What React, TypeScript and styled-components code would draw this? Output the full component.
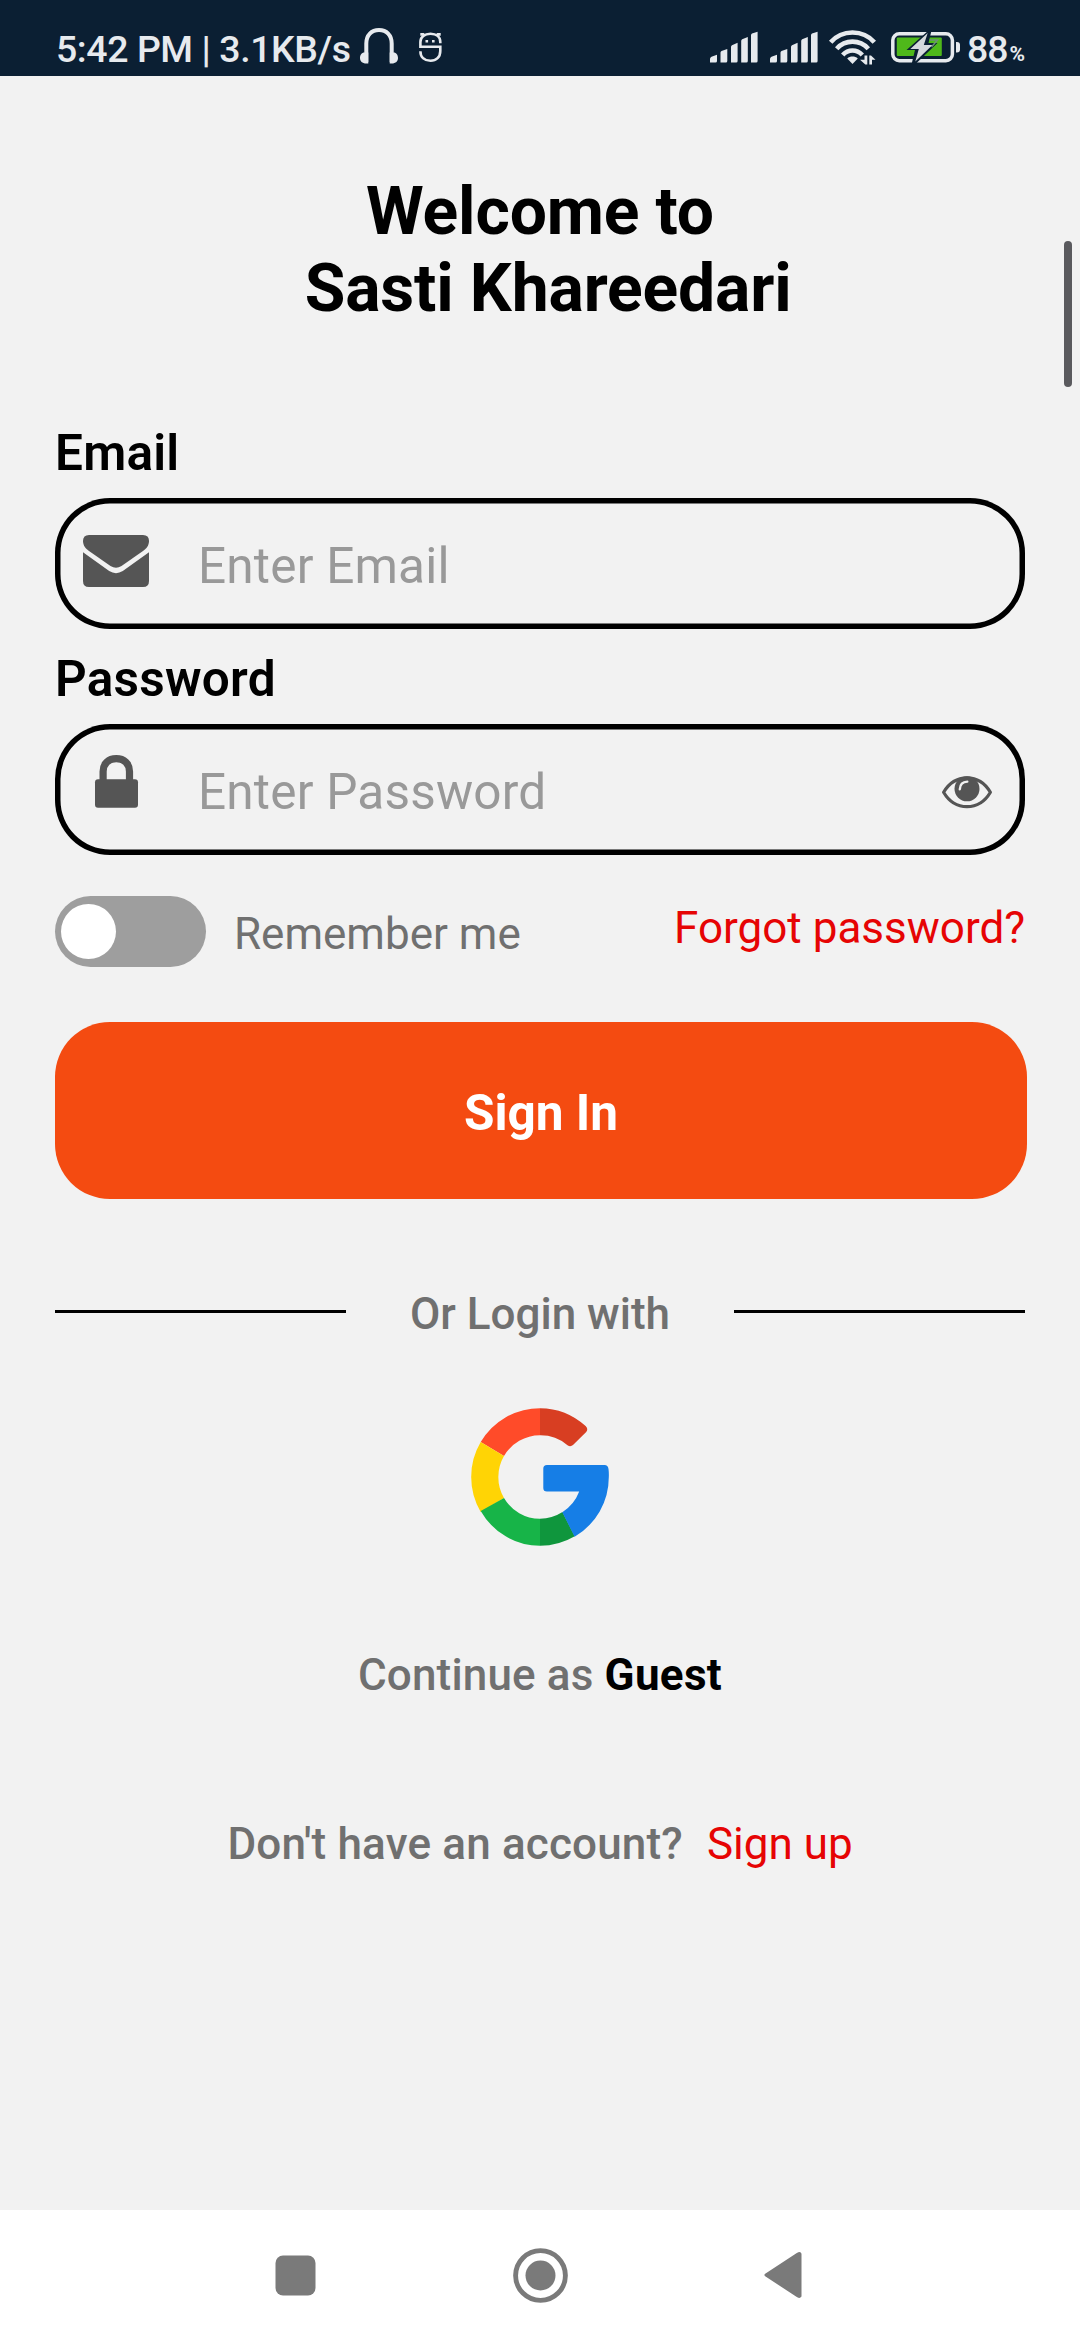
import React, { useState } from "react";
import styled, { createGlobalStyle } from "styled-components";

const GlobalStyle = createGlobalStyle`
  *, *::before, *::after { box-sizing: border-box; }
  body { margin: 0; background: #f2f2f2; }
  button, input { font: inherit; border: 0; padding: 0; margin: 0; background: none; color: inherit; }
`;

const Screen = styled.div`
  display: flex;
  flex-direction: column;
  position: relative;
  width: 1080px;
  height: 2340px;
  overflow: hidden;
  background: #f2f2f2;
  font-family: Roboto, "Noto Sans", sans-serif;
`;

const StatusBar = styled.header`
  display: flex;
  align-items: flex-start;
  justify-content: space-between;
  flex: none;
  height: 76px;
  padding: 27px 55px 0 56px;
  background: #0b1f33;
  color: #e7eaee;
`;

const StatusGroup = styled.div`
  display: flex;
  align-items: flex-start;
`;

const StatusText = styled.span<{ $tracking: number }>`
  font-size: 37.4px;
  line-height: 44px;
  font-weight: 500;
  letter-spacing: ${(p) => p.$tracking}px;
  white-space: pre;
`;

const Percent = styled.span`
  font-size: 21px;
  line-height: 26px;
  font-weight: 700;
  margin: 14px 0 0 2px;
`;

const Glyph = styled.svg<{ $left?: number; $top?: number }>`
  display: block;
  flex: none;
  overflow: visible;
  margin-left: ${(p) => p.$left ?? 0}px;
  margin-top: ${(p) => p.$top ?? 0}px;
`;

const Content = styled.main`
  display: flex;
  flex-direction: column;
  flex: 1;
  padding: 97px 55px 0;
`;

const Title = styled.h1`
  margin: 0 0 97px;
  font-size: 66px;
  line-height: 77px;
  font-weight: 700;
  letter-spacing: -0.15px;
  text-align: center;
  white-space: pre;
  color: #000;
`;

const Label = styled.label`
  font-size: 49.5px;
  line-height: 58px;
  font-weight: 600;
  letter-spacing: 0.25px;
  color: #000;
`;

const Field = styled.div`
  display: flex;
  align-items: center;
  height: 131px;
  margin: 16px 0 21px;
  padding: 0 33px 0 28px;
  box-shadow: inset 0 0 0 5.5px #000;
  border-radius: 55px;
`;

const FieldIcon = styled.span<{ $raise: number }>`
  display: flex;
  justify-content: center;
  width: 66px;
  margin: 0 49px ${(p) => p.$raise * 2}px 0;
  color: #555;
`;

const FieldInput = styled.input`
  flex: 1;
  min-width: 0;
  height: 58px;
  margin-top: 4px;
  font-size: 49.5px;
  letter-spacing: 0.2px;
  outline: none;
  &::placeholder { color: #999; opacity: 1; }
`;

const EyeButton = styled.button`
  display: flex;
  margin-top: 5px;
  color: #555;
`;

const OptionsRow = styled.div`
  display: flex;
  align-items: flex-start;
  height: 71px;
  margin: 20px 0 55px;
`;

const Switch = styled.button<{ $on: boolean }>`
  display: flex;
  align-items: center;
  justify-content: ${(p) => (p.$on ? "flex-end" : "flex-start")};
  width: 151px;
  height: 71px;
  padding: 0 6px;
  border-radius: 36px;
  background: #9e9e9e;
`;

const Thumb = styled.span`
  width: 55px;
  height: 55px;
  border-radius: 50%;
  background: #fff;
`;

const RememberText = styled.span`
  margin: 12px auto 0 28px;
  font-size: 44px;
  line-height: 52px;
  color: #707070;
`;

const LinkText = styled.a<{ $left?: number; $top?: number }>`
  margin-left: ${(p) => p.$left ?? 0}px;
  margin-top: ${(p) => p.$top ?? 0}px;
  font-size: 44px;
  line-height: 52px;
  color: #e60404;
`;

const SignInButton = styled.button`
  flex: none;
  width: 972px;
  height: 177px;
  padding-top: 5px;
  border-radius: 55px;
  background: #f44b11;
  color: #fff;
  font-size: 49.5px;
  line-height: 58px;
  font-weight: 700;
`;

const Divider = styled.div`
  display: flex;
  justify-content: space-between;
  margin-top: 89px;
`;

const Rule = styled.span`
  width: 291px;
  height: 3px;
  margin-top: 22px;
  background: #000;
`;

const Muted = styled.span<{ $tracking?: number }>`
  font-size: 44px;
  line-height: 52px;
  font-weight: 500;
  letter-spacing: ${(p) => p.$tracking ?? 0}px;
  color: #707070;
`;

const GoogleButton = styled.button`
  display: flex;
  align-self: center;
  margin-top: 68px;
`;

const Line = styled.p<{ $top: number }>`
  display: flex;
  justify-content: center;
  margin: ${(p) => p.$top}px 0 0;
  white-space: pre;
`;

const Strong = styled.b`
  font-size: 44px;
  line-height: 52px;
  font-weight: 700;
  letter-spacing: 0.3px;
  color: #000;
`;

const ScrollThumb = styled.div`
  position: absolute;
  top: 241px;
  right: 8px;
  width: 8px;
  height: 146px;
  border-radius: 4px;
  background: #5a5a5e;
`;

const NavBar = styled.nav`
  display: flex;
  align-items: center;
  justify-content: space-between;
  flex: none;
  height: 130px;
  padding: 0 278px 0 275px;
  background: #fff;
  color: #7a7a7a;
`;

const SignalIcon = ({ left }: { left: number }) => (
  <Glyph $left={left} $top={5} width="48" height="31" viewBox="0 0 48 31" fill="currentColor">
    <path d="M0 30.5V27q0-1.6 1.5-2.3L7 22.8v6.2q0 1.5-1.5 1.5zM10.5 30.5V20.5q0-1 1-1.5l5.8-2v12q0 1.5-1.5 1.5zM21 30.5V15q0-1.2 1-1.8l5.6-2.4V29q0 1.5-1.5 1.5zM31.2 30.5V9q0-1.2 1-1.8L37.8 5v24q0 1.5-1.5 1.5zM41 30.5V3.2q0-1.2 1-1.7L47.6-.2V29q0 1.5-1.5 1.5z" />
  </Glyph>
);

const HeadphonesIcon = () => (
  <Glyph $left={9} $top={1} width="38" height="36" viewBox="0 0 38 36" fill="none">
    <path d="M6.3 34V15.5C6.3 7 11.5 2 19 2s12.7 5 12.7 13.5V34" stroke="currentColor" strokeWidth="4" />
    <path d="M4.5 24.500h3.800V35.500H6.500C2 35.500 0 33 0 30s1.500-5.500 4.500-5.500zM33.500 24.500h-3.800V35.500h1.800c4.500 0 6.500-2.500 6.500-5.500s-1.500-5.500-4.500-5.500z" fill="currentColor" />
  </Glyph>
);

const DebugIcon = () => (
  <Glyph $left={21} $top={5} width="23" height="31" viewBox="0 0 23 31" fill="none" stroke="currentColor" strokeWidth="2.600">
    <path d="M21.300 11.300V10C21.300 5 17.500 1.700 11.500 1.700S1.400 5 1.400 10v4.800h19.900V19c0 6-4 9.800-9.800 9.800S1.400 25.500 1.400 19.300" />
    <path d="M1.300 2.400h3l1.500 1.400M21.700 2.400h-3l-1.500 1.400" />
    <path d="M6.500 9.200h2.600M13 9.200h2.600" />
  </Glyph>
);

const WifiIcon = () => (
  <Glyph $left={11} $top={3} width="47" height="35" viewBox="0 0 47 35" fill="none">
    <g stroke="currentColor" strokeWidth="4.600">
      <path d="M1.700 12.300C13-.7 34-.7 45.300 12.300" />
      <path d="M7.700 18.700c8.500-9.500 23.100-9.500 31.600 0" />
      <path d="M13.700 25c5.500-6 14.100-6 19.600 0" />
    </g>
    <path d="M18.200 28.500c3-2.600 7.600-2.600 10.600 0L23.500 34z" fill="currentColor" />
    <path d="M31 28l5.500 7h-8z" fill="#0b1f33" />
    <path d="M35.500 25.500h2.800v9h-2L31 29.800h4.500zM40.300 34.500v-9h1.700l4.500 4.200h-3.500v4.800z" fill="currentColor" />
  </Glyph>
);

const BatteryIcon = () => (
  <Glyph $left={15} $top={5} width="69" height="31" viewBox="0 0 69 31" fill="none">
    <rect x="1.800" y="1.800" width="59.600" height="26.900" rx="6.500" stroke="currentColor" strokeWidth="3.500" />
    <rect x="5.800" y="5.500" width="45" height="18.500" rx="1" fill="#4fb81a" />
    <path d="M37.500-1.500L15.500 18h8.500l-3.500 14.500h3.500L46.500 11h-9l3-12.500z" fill="#0b1f33" />
    <path d="M36.700 1L19.300 17h8.500l-3.500 12.500L41.500 13h-8.700z" fill="#d5d9dd" />
    <path d="M38.500 8h8l-6 7" stroke="#6e8f78" strokeWidth="1.500" />
    <path d="M65 10h1q3 0 3 3v4.500q0 3-3 3h-1z" fill="currentColor" />
  </Glyph>
);

const MailIcon = () => (
  <Glyph width="66" height="52" viewBox="0 0 66 52" fill="currentColor">
    <path d="M6 0h54q6 0 6 6c0 4.500-2.500 7.500-6 10L38.500 31q-5.500 3.500-11 0L6 16C2.500 13.500 0 10.500 0 6q0-6 6-6z" />
    <path d="M0 17.300L26.200 36q6.800 4.300 13.600 0L66 17.300V46q0 6-6 6H6q-6 0-6-6z" />
  </Glyph>
);

const LockIcon = () => (
  <Glyph width="43" height="53" viewBox="0 0 43 53">
    <path d="M8.100 26V16.500C8.100 8.500 13.500 3.600 21.300 3.600S34.500 8.500 34.500 16.500V26" fill="none" stroke="currentColor" strokeWidth="7.200" />
    <rect y="24.300" width="43" height="28.500" rx="3" fill="currentColor" />
  </Glyph>
);

const EyeIcon = () => (
  <Glyph width="50" height="33" viewBox="0 0 50 33">
    <path d="M1.600 16.200C13-3 37-3 48.400 16.200 37 35.500 13 35.500 1.600 16.200z" fill="none" stroke="currentColor" strokeWidth="3.200" strokeLinejoin="round" />
    <circle cx="25" cy="12.800" r="12.500" fill="currentColor" />
    <path d="M17.800 13.200Q18.200 5.800 25.300 5.600" fill="none" stroke="#f2f2f2" strokeWidth="2.400" strokeLinecap="round" />
  </Glyph>
);

const GoogleIcon = () => (
  <Glyph width="138" height="138" viewBox="-69 -69 138 138">
    <path d="M0-68.800A68.800 68.800 0 0 0-59.300-34.900L-36-21A41.700 41.700 0 0 1 0-41.700z" fill="#ff4b29" />
    <path d="M0-68.800V-41.700A41.700 41.700 0 0 1 27.500-31.800Q30.500-29.800 33-32L46.200-45.100Q48.600-48 45.600-51A68.800 68.800 0 0 0 0-68.800z" fill="#d83e22" />
    <path d="M-59.300-34.900A68.800 68.800 0 0 0-59.300 34.900L-36 21A41.700 41.700 0 0 1-36-21z" fill="#ffd405" />
    <path d="M0 68.800A68.800 68.800 0 0 1-59.300 34L-36 21A41.700 41.700 0 0 0 0 41.700z" fill="#17b448" />
    <path d="M0 68.800A68.800 68.800 0 0 0 34.800 59.300L22.500 35.100A41.700 41.700 0 0 1 0 41.700z" fill="#0f963d" />
    <path d="M7-12H64.500Q68 -12 68.500-8Q69-4 68.800 0A68.800 68.800 0 0 1 34.600 59.700L22.300 35.300A42 42 0 0 0 39.200 14.600H7Q3.300 14.600 3.300 11V-8.400Q3.300-12 7-12z" fill="#167ee6" />
  </Glyph>
);

const RecentsIcon = () => (
  <Glyph width="41" height="41" viewBox="0 0 41 41">
    <rect x=".5" y=".5" width="40" height="40" rx="7.500" fill="currentColor" />
  </Glyph>
);

const HomeIcon = () => (
  <Glyph width="55" height="55" viewBox="0 0 55 55">
    <circle cx="27.500" cy="27.500" r="24.900" fill="none" stroke="currentColor" strokeWidth="4.900" />
    <circle cx="27.500" cy="27.500" r="15" fill="currentColor" />
  </Glyph>
);

const BackIcon = () => (
  <Glyph width="38" height="46" viewBox="0 0 38 46">
    <path d="M34 2L2 23l32 21q1.500.8 2 0V2q-.5-.8-2 0z" fill="currentColor" stroke="currentColor" strokeWidth="3" strokeLinejoin="round" />
  </Glyph>
);

export default function App() {
  const [remember, setRemember] = useState(false);
  const [visible, setVisible] = useState(false);

  return (
    <>
      <GlobalStyle />
      <Screen>
        <StatusBar>
          <StatusGroup>
            <StatusText $tracking={-0.4}>5:42 PM | 3.1KB/s</StatusText>
            <HeadphonesIcon />
            <DebugIcon />
          </StatusGroup>
          <StatusGroup>
            <SignalIcon left={0} />
            <SignalIcon left={12} />
            <WifiIcon />
            <BatteryIcon />
            <Glyph width="7" height="1" />
            <StatusText $tracking={-1}>88</StatusText>
            <Percent>%</Percent>
          </StatusGroup>
        </StatusBar>

        <Content>
          <Title>{"Welcome to\n Sasti Khareedari"}</Title>

          <Label htmlFor="email">Email</Label>
          <Field>
            <FieldIcon $raise={3}><MailIcon /></FieldIcon>
            <FieldInput id="email" type="email" placeholder="Enter Email" />
          </Field>

          <Label htmlFor="password">Password</Label>
          <Field>
            <FieldIcon $raise={8}><LockIcon /></FieldIcon>
            <FieldInput id="password" type={visible ? "text" : "password"} placeholder="Enter Password" />
            <EyeButton type="button" onClick={() => setVisible(!visible)}><EyeIcon /></EyeButton>
          </Field>

          <OptionsRow>
            <Switch type="button" $on={remember} onClick={() => setRemember(!remember)}>
              <Thumb />
            </Switch>
            <RememberText>Remember me</RememberText>
            <LinkText $top={6}>Forgot password?</LinkText>
          </OptionsRow>

          <SignInButton type="button">Sign In</SignInButton>

          <Divider>
            <Rule />
            <Muted>Or Login with</Muted>
            <Rule />
          </Divider>

          <GoogleButton type="button"><GoogleIcon /></GoogleButton>

          <Line $top={103}>
            <Muted $tracking={0.15}>Continue as </Muted>
            <Strong>Guest</Strong>
          </Line>
          <Line $top={117}>
            <Muted $tracking={0.17}>Don't have an account?</Muted>
            <LinkText $left={24}>Sign up</LinkText>
          </Line>
        </Content>

        <NavBar>
          <RecentsIcon />
          <HomeIcon />
          <BackIcon />
        </NavBar>
        <ScrollThumb />
      </Screen>
    </>
  );
}
